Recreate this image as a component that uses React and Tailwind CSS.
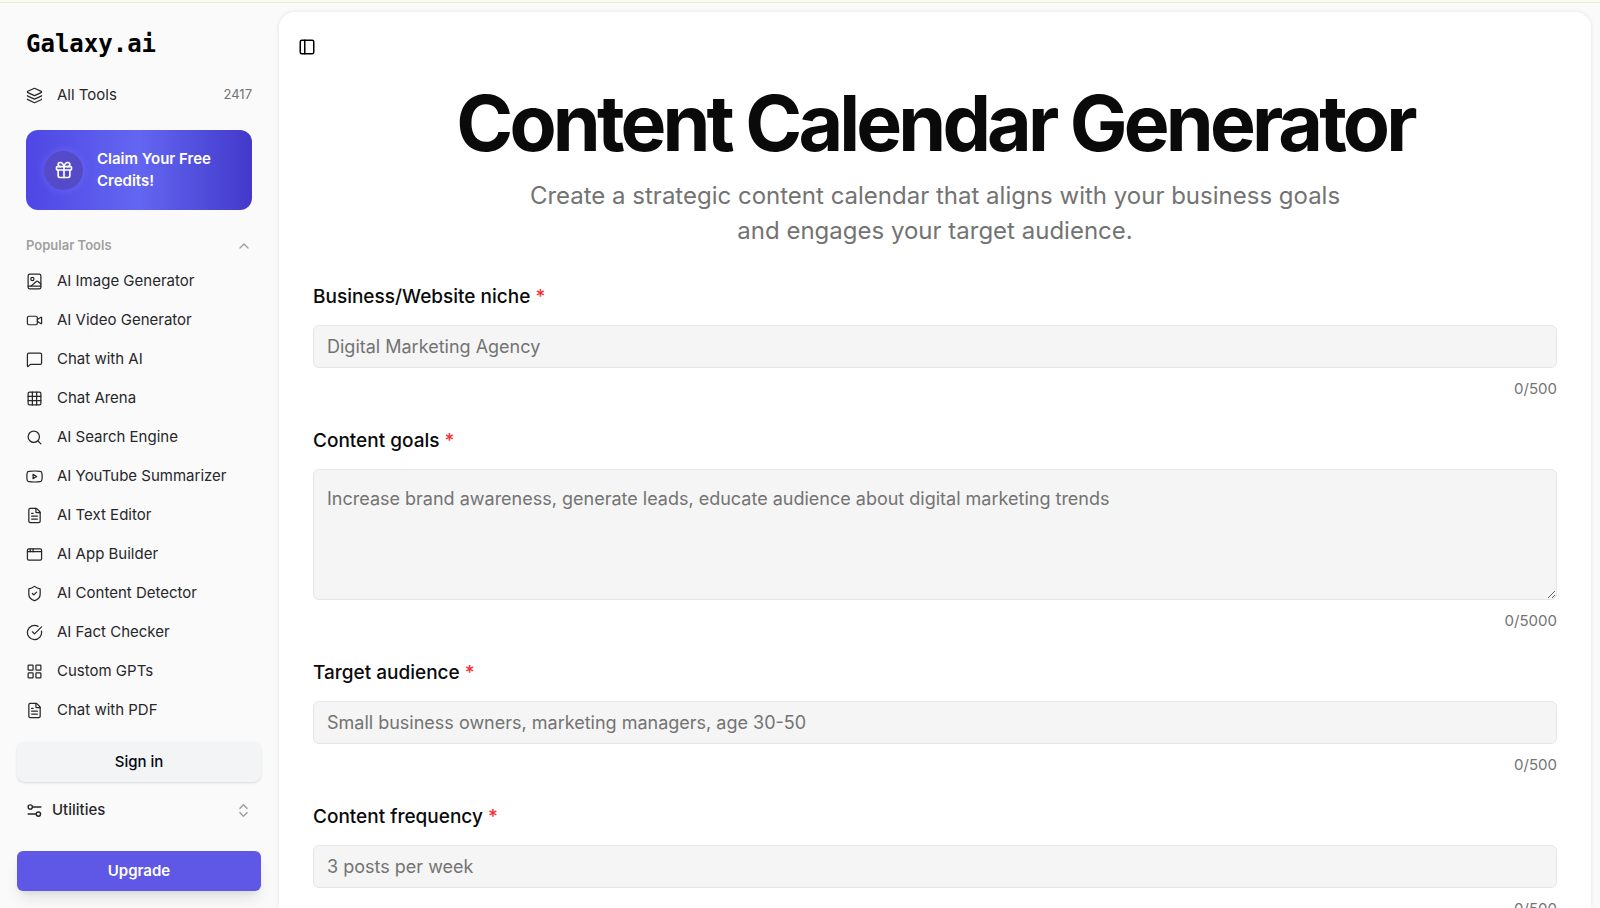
import {
  Layers,
  Gift,
  ChevronUp,
  ChevronsUpDown,
  Video,
  MessageSquare,
  Grid3x3,
  Search,
  FileText,
  AppWindow,
  ShieldCheck,
  CircleCheckBig,
  LayoutGrid,
  PanelLeft,
} from 'lucide-react'

const iconProps = {
  viewBox: '0 0 24 24',
  fill: 'none',
  stroke: 'currentColor',
  strokeWidth: 2,
  strokeLinecap: 'round',
  strokeLinejoin: 'round',
  'aria-hidden': true,
}

const ImageFileIcon = ({ className }) => (
  <svg {...iconProps} className={className} strokeWidth={1.75}>
    <rect x="3" y="1.5" width="18" height="21" rx="2.5" />
    <circle cx="9" cy="8.5" r="2.25" />
    <path d="M3 18.5h18" />
    <path d="m7 18.5 7.5-6.6a1.8 1.8 0 0 1 2.4 0L21 15.5" />
  </svg>
)

const VideoPlayIcon = ({ className }) => (
  <svg {...iconProps} className={className} strokeWidth={1.75}>
    <path d="M1.7 17a24 24 0 0 1 0-10 2.6 2.6 0 0 1 2.2-2.1 50 50 0 0 1 16.2 0A2.6 2.6 0 0 1 22.3 7a24 24 0 0 1 0 10 2.6 2.6 0 0 1-2.2 2.1 50 50 0 0 1-16.2 0A2.6 2.6 0 0 1 1.7 17" />
    <path d="m10 15 5-3-5-3z" />
  </svg>
)

const SettingsIcon = ({ className }) => (
  <svg {...iconProps} className={className}>
    <path d="M21 7h-11" />
    <path d="M14 17H3" />
    <circle cx="17.5" cy="17" r="3" />
    <circle cx="6" cy="7" r="3" />
  </svg>
)

const popularTools = [
  { name: 'AI Image Generator', icon: ImageFileIcon },
  { name: 'AI Video Generator', icon: Video },
  { name: 'Chat with AI', icon: MessageSquare },
  { name: 'Chat Arena', icon: Grid3x3 },
  { name: 'AI Search Engine', icon: Search },
  { name: 'AI YouTube Summarizer', icon: VideoPlayIcon },
  { name: 'AI Text Editor', icon: FileText },
  { name: 'AI App Builder', icon: AppWindow },
  { name: 'AI Content Detector', icon: ShieldCheck },
  { name: 'AI Fact Checker', icon: CircleCheckBig },
  { name: 'Custom GPTs', icon: LayoutGrid },
  { name: 'Chat with PDF', icon: FileText },
]

const fields = [
  { id: 'niche', label: 'Business/Website niche', placeholder: 'Digital Marketing Agency', max: 500 },
  {
    id: 'goals',
    label: 'Content goals',
    placeholder: 'Increase brand awareness, generate leads, educate audience about digital marketing trends',
    max: 5000,
    multiline: true,
  },
  {
    id: 'audience',
    label: 'Target audience',
    placeholder: 'Small business owners, marketing managers, age 30-50',
    max: 500,
  },
  { id: 'frequency', label: 'Content frequency', placeholder: '3 posts per week', max: 500 },
]

const Sidebar = () => (
  <aside className="flex w-[279px] shrink-0 flex-col">
    <div className="flex min-h-0 flex-1 flex-col overflow-hidden pt-[25px] pr-[27px] pl-[26px]">
      {/* Logo */}
      <a href="#" className="font-['DejaVu_Sans_Mono',monospace] text-2xl leading-8 font-bold text-black">
        Galaxy.ai
      </a>

      <a href="#" className="mt-[15px] flex h-10 items-center text-[15px] text-zinc-800">
        <Layers className="mr-3.5 h-[17px] w-[17px]" strokeWidth={1.75} />
        All Tools
        <span className="ml-auto text-[13px] text-neutral-500">2417</span>
      </a>

      {/* Credits banner */}
      <button className="mt-[15px] flex h-20 shrink-0 items-center rounded-xl bg-linear-to-r from-[#4f46e5] via-[#6366f1] to-[#4338ca] px-[18px] text-left text-white">
        <span className="mr-3.5 flex h-[39px] w-[39px] shrink-0 items-center justify-center rounded-full bg-[#554bc8] shadow-[0_0_10px_rgba(129,120,255,0.5)]">
          <Gift className="h-5 w-5" />
        </span>
        <span className="text-[15px] leading-[22px] font-semibold">Claim Your Free Credits!</span>
      </button>

      {/* Popular tools */}
      <button className="mt-[25px] flex h-[22px] shrink-0 items-center justify-between text-[13px] font-semibold text-[#a0a0a0]">
        Popular Tools
        <ChevronUp className="h-4 w-4" />
      </button>
      <nav className="mt-[5px]">
        {popularTools.map(({ name, icon: Icon }) => (
          <a key={name} href="#" className="flex h-[39px] items-center text-[15px] text-zinc-800">
            <Icon className="mr-3.5 h-[17px] w-[17px]" strokeWidth={1.75} />
            {name}
          </a>
        ))}
      </nav>
    </div>

    {/* Footer */}
    <div className="flex flex-col pr-[18px] pb-[17px] pl-[17px]">
      <button className="h-10 rounded-lg bg-gray-100 text-[15px] font-medium text-gray-950 shadow-sm">
        Sign in
      </button>
      <button className="mt-2 flex h-10 items-center px-[9px] text-[15px] font-medium text-zinc-800">
        <SettingsIcon className="mr-[9px] h-[17px] w-[17px]" />
        Utilities
        <ChevronsUpDown className="ml-auto h-[17px] w-[17px] text-neutral-400" />
      </button>
      <button className="mt-[21px] h-10 rounded-md bg-[#5f57e6] text-[15px] font-semibold text-white shadow-lg">
        Upgrade
      </button>
    </div>
  </aside>
)

const controlClass =
  'mt-3.5 block w-full rounded-md border border-neutral-200 bg-neutral-100 px-[13px] text-lg text-neutral-900 placeholder:text-neutral-500'

const Field = ({ field }) => (
  <div className="flex flex-col">
    <label htmlFor={field.id} className="text-[19px] leading-7 font-medium text-neutral-950">
      {field.label} <span className="text-red-500">*</span>
    </label>
    {field.multiline ? (
      <textarea
        id={field.id}
        placeholder={field.placeholder}
        className={`h-[131px] resize-y py-[15px] ${controlClass}`}
      />
    ) : (
      <input id={field.id} type="text" placeholder={field.placeholder} className={`h-[43px] ${controlClass}`} />
    )}
    <p className="mt-2.5 text-right text-[15px] leading-[22px] text-neutral-500">0/{field.max}</p>
  </div>
)

const App = () => {
  return (
    <div className="flex h-screen flex-col overflow-hidden bg-[#fafafa] font-['Inter',sans-serif]">
      <div className="h-[3px] shrink-0 border-b border-[#e8ead8] bg-[#fbfcee]" />
      <div className="flex min-h-0 flex-1">
        <Sidebar />
        <main className="mt-[9px] mr-[9px] min-w-0 flex-1 overflow-y-auto rounded-t-2xl bg-white shadow-[0_0_4px_rgba(0,0,0,0.1)] [scrollbar-width:none]">
          <div className="px-[19px] pt-[26px]">
            <button aria-label="Toggle sidebar" className="block">
              <PanelLeft className="h-[18px] w-[18px]" />
            </button>
          </div>

          <header className="mt-7 px-[34px] text-center">
            <h1 className="text-[77px] leading-[78px] font-bold tracking-tighter text-neutral-950">
              Content Calendar Generator
            </h1>
            <p className="mx-auto mt-4 max-w-[836px] text-2xl leading-[35px] text-neutral-500">
              Create a strategic content calendar that aligns with your business goals and engages your target
              audience.
            </p>
          </header>

          <form className="mt-[35px] flex flex-col gap-[27px] px-[34px] pb-10">
            {fields.map((field) => (
              <Field key={field.id} field={field} />
            ))}
          </form>
        </main>
      </div>
    </div>
  )
}

export default App
